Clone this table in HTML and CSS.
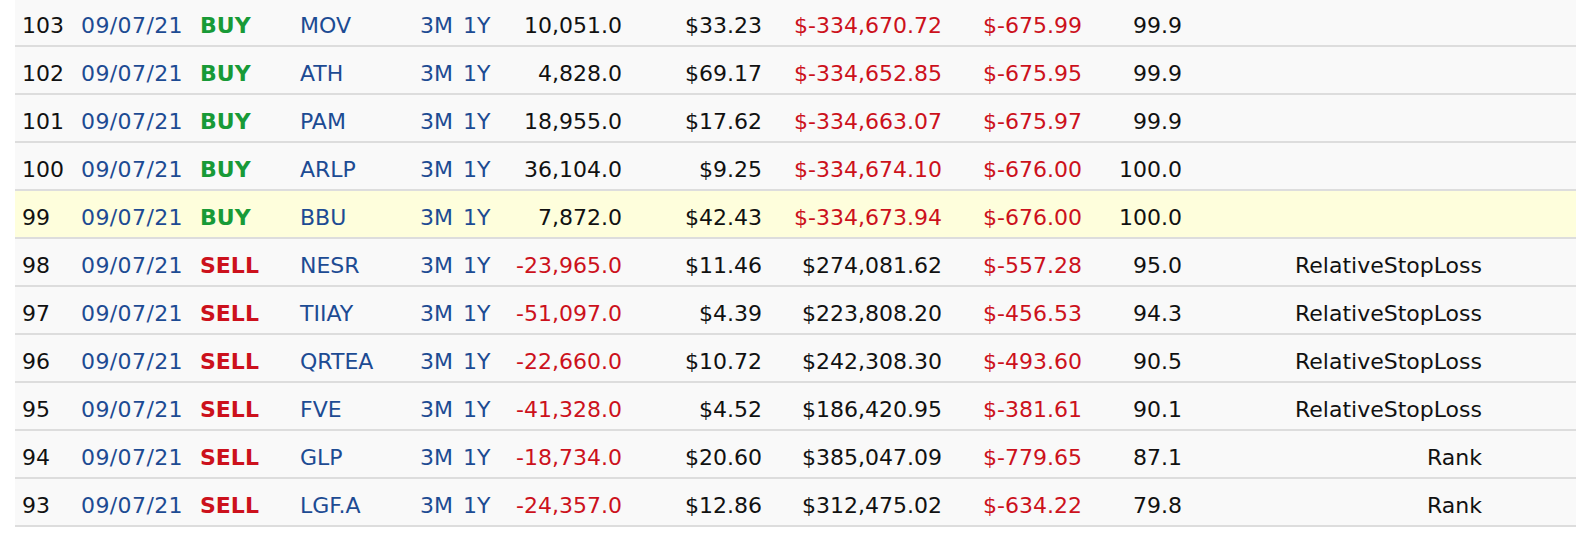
FILE: index.html
```html
<!DOCTYPE html>
<html lang="en">
<head>
<meta charset="utf-8">
<title>Trades</title>
<link rel="stylesheet" href="styles.css">
</head>
<body>
<div class="page">
<table class="trades">
  <colgroup>
    <col class="c-num"><col class="c-date"><col class="c-act"><col class="c-sym"><col class="c-links">
    <col class="c-shares"><col class="c-price"><col class="c-value"><col class="c-chg"><col class="c-score"><col class="c-reason"><col class="c-rest">
  </colgroup>
  <tbody>
    <tr><td>103</td><td class="date"><a class="lnk">09/07/21</a></td><td class="buy">BUY</td><td><a class="lnk">MOV</a></td><td class="links"><a class="lnk">3M</a> <a class="lnk">1Y</a></td><td class="r">10,051.0</td><td class="r">$33.23</td><td class="r neg">$-334,670.72</td><td class="r neg">$-675.99</td><td class="r">99.9</td><td class="r"></td><td></td></tr>
    <tr><td>102</td><td class="date"><a class="lnk">09/07/21</a></td><td class="buy">BUY</td><td><a class="lnk">ATH</a></td><td class="links"><a class="lnk">3M</a> <a class="lnk">1Y</a></td><td class="r">4,828.0</td><td class="r">$69.17</td><td class="r neg">$-334,652.85</td><td class="r neg">$-675.95</td><td class="r">99.9</td><td class="r"></td><td></td></tr>
    <tr><td>101</td><td class="date"><a class="lnk">09/07/21</a></td><td class="buy">BUY</td><td><a class="lnk">PAM</a></td><td class="links"><a class="lnk">3M</a> <a class="lnk">1Y</a></td><td class="r">18,955.0</td><td class="r">$17.62</td><td class="r neg">$-334,663.07</td><td class="r neg">$-675.97</td><td class="r">99.9</td><td class="r"></td><td></td></tr>
    <tr><td>100</td><td class="date"><a class="lnk">09/07/21</a></td><td class="buy">BUY</td><td><a class="lnk">ARLP</a></td><td class="links"><a class="lnk">3M</a> <a class="lnk">1Y</a></td><td class="r">36,104.0</td><td class="r">$9.25</td><td class="r neg">$-334,674.10</td><td class="r neg">$-676.00</td><td class="r">100.0</td><td class="r"></td><td></td></tr>
    <tr class="hl"><td>99</td><td class="date"><a class="lnk">09/07/21</a></td><td class="buy">BUY</td><td><a class="lnk">BBU</a></td><td class="links"><a class="lnk">3M</a> <a class="lnk">1Y</a></td><td class="r">7,872.0</td><td class="r">$42.43</td><td class="r neg">$-334,673.94</td><td class="r neg">$-676.00</td><td class="r">100.0</td><td class="r"></td><td></td></tr>
    <tr><td>98</td><td class="date"><a class="lnk">09/07/21</a></td><td class="sell">SELL</td><td><a class="lnk">NESR</a></td><td class="links"><a class="lnk">3M</a> <a class="lnk">1Y</a></td><td class="r neg">-23,965.0</td><td class="r">$11.46</td><td class="r">$274,081.62</td><td class="r neg">$-557.28</td><td class="r">95.0</td><td class="r">RelativeStopLoss</td><td></td></tr>
    <tr><td>97</td><td class="date"><a class="lnk">09/07/21</a></td><td class="sell">SELL</td><td><a class="lnk">TIIAY</a></td><td class="links"><a class="lnk">3M</a> <a class="lnk">1Y</a></td><td class="r neg">-51,097.0</td><td class="r">$4.39</td><td class="r">$223,808.20</td><td class="r neg">$-456.53</td><td class="r">94.3</td><td class="r">RelativeStopLoss</td><td></td></tr>
    <tr><td>96</td><td class="date"><a class="lnk">09/07/21</a></td><td class="sell">SELL</td><td><a class="lnk">QRTEA</a></td><td class="links"><a class="lnk">3M</a> <a class="lnk">1Y</a></td><td class="r neg">-22,660.0</td><td class="r">$10.72</td><td class="r">$242,308.30</td><td class="r neg">$-493.60</td><td class="r">90.5</td><td class="r">RelativeStopLoss</td><td></td></tr>
    <tr><td>95</td><td class="date"><a class="lnk">09/07/21</a></td><td class="sell">SELL</td><td><a class="lnk">FVE</a></td><td class="links"><a class="lnk">3M</a> <a class="lnk">1Y</a></td><td class="r neg">-41,328.0</td><td class="r">$4.52</td><td class="r">$186,420.95</td><td class="r neg">$-381.61</td><td class="r">90.1</td><td class="r">RelativeStopLoss</td><td></td></tr>
    <tr><td>94</td><td class="date"><a class="lnk">09/07/21</a></td><td class="sell">SELL</td><td><a class="lnk">GLP</a></td><td class="links"><a class="lnk">3M</a> <a class="lnk">1Y</a></td><td class="r neg">-18,734.0</td><td class="r">$20.60</td><td class="r">$385,047.09</td><td class="r neg">$-779.65</td><td class="r">87.1</td><td class="r">Rank</td><td></td></tr>
    <tr><td>93</td><td class="date"><a class="lnk">09/07/21</a></td><td class="sell">SELL</td><td><a class="lnk">LGF.A</a></td><td class="links"><a class="lnk">3M</a> <a class="lnk">1Y</a></td><td class="r neg">-24,357.0</td><td class="r">$12.86</td><td class="r">$312,475.02</td><td class="r neg">$-634.22</td><td class="r">79.8</td><td class="r">Rank</td><td></td></tr>
  </tbody>
</table>
</div>
</body>
</html>
```

FILE: styles.css
```css
html, body {
  margin: 0;
  padding: 0;
  background: #ffffff;
}

.page {
  padding-left: 15px;
  margin-top: -1px;
}

.trades {
  width: 1561px;
  table-layout: fixed;
  border-collapse: separate;
  border-spacing: 0;
  font-family: "DejaVu Sans", Verdana, sans-serif;
  font-size: 22px;
  line-height: 26px;
  color: #111111;
}

.c-num { width: 65px; }
.c-date { width: 120px; }
.c-act { width: 100px; }
.c-sym { width: 120px; }
.c-links { width: 80px; }
.c-shares { width: 122px; }
.c-price { width: 140px; }
.c-value { width: 180px; }
.c-chg { width: 140px; }
.c-score { width: 100px; }
.c-reason { width: 300px; }
.c-rest { width: 94px; }

.trades td {
  padding: 14px 0 6px 0;
  background: #f9f9f9;
  border-bottom: 2px solid #dddddd;
  white-space: nowrap;
  text-align: left;
}

.trades td:first-child {
  padding-left: 7px;
}

.trades td.date {
  padding-left: 1px;
  letter-spacing: 0.4px;
}

.trades tr.hl td {
  background: #fefedc;
}

.trades td.r {
  text-align: right;
}

.lnk {
  color: #1d4b93;
  text-decoration: none;
}

.links .lnk + .lnk {
  margin-left: 3px;
}

.buy {
  color: #189a37;
  font-weight: bold;
}

.sell {
  color: #cc111c;
  font-weight: bold;
}

.neg {
  color: #cc111c;
}
```
